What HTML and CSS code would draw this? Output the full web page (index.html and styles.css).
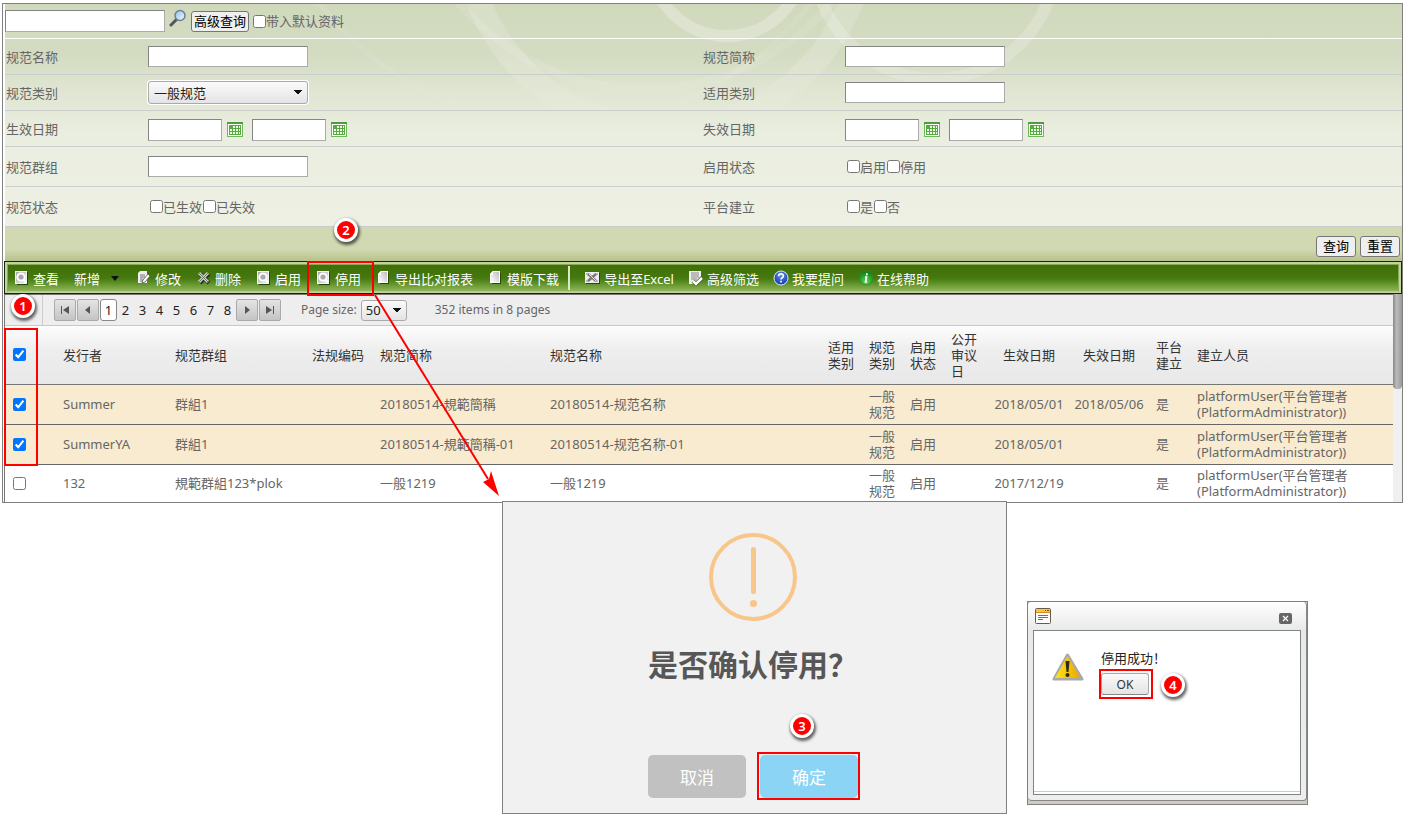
FILE: index.html
```html
<!DOCTYPE html>
<html lang="zh-CN">
<head>
<meta charset="utf-8">
<title>规范管理</title>
<link rel="stylesheet" href="styles.css">
</head>
<body>
<svg class="defs" aria-hidden="true">
  <defs>
    <linearGradient id="lens" x1="0" y1="0" x2="1" y2="1"><stop offset="0" stop-color="#8fc0e8"/><stop offset="1" stop-color="#f4faff"/></linearGradient>
    <linearGradient id="paper" x1="1" y1="0" x2="0" y2="1"><stop offset="0" stop-color="#bdbdbd"/><stop offset="1" stop-color="#fff"/></linearGradient>
    <linearGradient id="tile" x1="0" y1="0" x2="1" y2="1"><stop offset="0" stop-color="#a8a8a8"/><stop offset="1" stop-color="#efefef"/></linearGradient>
    <radialGradient id="blue" cx=".5" cy=".3" r=".7"><stop offset="0" stop-color="#5b8df0"/><stop offset="1" stop-color="#1237a8"/></radialGradient>
    <radialGradient id="green" cx=".5" cy=".75" r=".7"><stop offset="0" stop-color="#5ad84a"/><stop offset="1" stop-color="#0f7d1c"/></radialGradient>
    <linearGradient id="warn" x1="0" y1="0" x2="1" y2="0"><stop offset="0" stop-color="#ffe21a"/><stop offset="1" stop-color="#e9a800"/></linearGradient>
    <symbol id="cal" viewBox="0 0 16 15">
      <rect x=".5" y=".5" width="15" height="14" fill="#fff" stroke="#6fb95a"/>
      <path d="M0 0h16v2H0z" fill="#4e9c3a"/><path d="M2 3h12v10H2z" fill="#58a844"/>
      <path d="M6 4h2v2H6zM9 4h2v2H9zM12 4h1v2h-1zM3 7h2v2H3zM6 7h2v2H6zM9 7h2v2H9zM12 7h1v2h-1zM3 10h2v2H3zM6 10h2v2H6zM9 10h2v2H9zM12 10h1v2h-1z" fill="#eaffdf"/>
    </symbol>
    <symbol id="view" viewBox="0 0 16 16">
      <path d="M3 2h11v13H3z" fill="#234507"/><path d="M1 1h12v13H1z" fill="#f4f4f4"/><path d="M2 2h10v11H2z" fill="url(#tile)"/>
      <circle cx="7" cy="7" r="3.600" fill="#a9a9a9" stroke="#fff" stroke-width="2"/><path d="m9.500 10 2.500 2.500" stroke="#fff" stroke-width="2"/>
    </symbol>
    <symbol id="doc" viewBox="0 0 16 16">
      <path d="M6 3h7v11H4V6z" fill="#244806"/><path d="M5 1h7v12H2V4z" fill="#fff"/><path d="M5 2h6v10H3V5h2z" fill="url(#paper)"/><path d="M2 4h3V1z" fill="#fff"/>
    </symbol>
  </defs>
</svg>
<main class="page">
  <section class="app">
    <form class="search">
      <svg class="rings" viewBox="0 0 1400 222" preserveAspectRatio="xMinYMin slice" aria-hidden="true">
        <g fill="none" stroke="#fff">
          <circle cx="722" cy="-45" r="77" stroke-width="12" stroke-opacity=".25"/>
          <circle cx="930" cy="-46" r="121" stroke-width="12" stroke-opacity=".2"/>
          <circle cx="660" cy="-75" r="200" stroke-width="24" stroke-opacity=".16"/>
          <circle cx="640" cy="-160" r="245" stroke-width="8" stroke-opacity=".1"/>
          <circle cx="560" cy="-190" r="310" stroke-width="5" stroke-opacity=".08"/>
        </g>
      </svg>
      <div class="quick">
        <input class="text wide" type="text" aria-label="关键字">
        <svg class="lens" viewBox="0 0 18 18" aria-hidden="true"><path d="m2 16 6-6" stroke="#555" stroke-width="3" stroke-linecap="round"/><circle cx="11" cy="6.500" r="5" fill="url(#lens)" stroke="#6f7f93" stroke-width="1.500"/></svg>
        <button class="btn" type="button">高级查询</button>
        <label class="check"><input type="checkbox">带入默认资料</label>
      </div>
      <div class="row"><div class="field"><label for="f1">规范名称</label><input class="text wide" id="f1" type="text"></div><div class="field"><label for="f2">规范简称</label><input class="text wide" id="f2" type="text"></div></div>
      <div class="row"><div class="field"><label for="f3">规范类别</label><select class="select" id="f3"><option>一般规范</option></select></div><div class="field"><label for="f4">适用类别</label><input class="text wide" id="f4" type="text"></div></div>
      <div class="row">
        <div class="field"><label for="f5">生效日期</label><div class="dates"><input class="text date" id="f5" type="text"><svg class="cal"><use href="#cal"/></svg><input class="text date" type="text" aria-label="生效日期至"><svg class="cal"><use href="#cal"/></svg></div></div>
        <div class="field"><label for="f6">失效日期</label><div class="dates"><input class="text date" id="f6" type="text"><svg class="cal"><use href="#cal"/></svg><input class="text date" type="text" aria-label="失效日期至"><svg class="cal"><use href="#cal"/></svg></div></div>
      </div>
      <div class="row tall"><div class="field"><label for="f7">规范群组</label><input class="text wide" id="f7" type="text"></div><div class="field"><span>启用状态</span><div class="checks"><label class="check"><input type="checkbox">启用</label><label class="check"><input type="checkbox">停用</label></div></div></div>
      <div class="row tall"><div class="field"><span>规范状态</span><div class="checks"><label class="check"><input type="checkbox">已生效</label><label class="check"><input type="checkbox">已失效</label></div></div><div class="field"><span>平台建立</span><div class="checks"><label class="check"><input type="checkbox">是</label><label class="check"><input type="checkbox">否</label></div></div></div>
      <div class="actions"><button class="btn" type="button">查询</button><button class="btn" type="button">重置</button></div>
    </form>

    <nav class="toolbar"><div class="tools">
      <button class="tool" type="button"><svg><use href="#view"/></svg>查看</button>
      <button class="tool menu" type="button">新增<span class="caret"></span></button>
      <button class="tool" type="button"><svg viewBox="0 0 16 16"><path d="M4 1h7v12H2V3z" fill="#eee"/><path d="M4 5h5M4 7h5M4 9h3M4 11h3" stroke="#777"/><path d="m6 13 1-3 5-6 2 2-5 6z" fill="#fff" stroke="#555" stroke-width=".8"/></svg>修改</button>
      <button class="tool" type="button"><svg viewBox="0 0 16 16"><path d="m4 4 9 9M13 4l-9 9" stroke="#203f06" stroke-width="4"/><path d="m3 3 9 9M12 3l-9 9" stroke="#d0d0d0" stroke-width="3"/><path d="m3 3 9 9M12 3l-9 9" stroke="#555" stroke-width=".8"/></svg>删除</button>
      <button class="tool" type="button"><svg><use href="#view"/></svg>启用</button>
      <button class="tool marked" type="button"><svg><use href="#view"/></svg>停用</button>
      <button class="tool" type="button"><svg><use href="#doc"/></svg>导出比对报表</button>
      <button class="tool" type="button"><svg><use href="#doc"/></svg>模版下载</button>
      <span class="sep"></span>
      <button class="tool" type="button"><svg viewBox="0 0 16 16"><path d="M1 3h14v11H1z" fill="#244806"/><path d="M0 2h14v11H0z" fill="#eee"/><path d="M1 4h3M1 11h3M10 4h3M10 11h3" stroke="#888"/><path d="m3 4 8 7M11 4l-8 7" stroke="#777" stroke-width="2.500"/><path d="m4 4 7 7" stroke="#fff" stroke-width=".8"/></svg>导出至Excel</button>
      <button class="tool" type="button"><svg viewBox="0 0 16 16"><path d="M1 1h12v11H8l-2 2H1z" fill="#eee"/><path d="M3 3h8M3 5h8M3 7h8M3 9h6" stroke="#888"/><path d="m5 11 3 3 6-6" fill="none" stroke="#35600e" stroke-width="4"/><path d="m5 11 3 3 6-6" fill="none" stroke="#fff" stroke-width="2.500"/></svg>高级筛选</button>
      <button class="tool" type="button"><svg viewBox="0 0 16 16"><circle cx="8" cy="8" r="7" fill="url(#blue)" stroke="#dfe9ff"/><path d="M5.600 6.200c0-3 4.800-3 4.800-.2 0 1.800-2.400 1.600-2.400 3.400M8 10.800v1.700" fill="none" stroke="#fff" stroke-width="1.700"/></svg>我要提问</button>
      <button class="tool" type="button"><svg viewBox="0 0 16 16"><circle cx="8" cy="8" r="7" fill="url(#green)" stroke="#2d8a2a" stroke-width=".8"/><path d="M8.800 3.200v2M7 7h1.500l-1 5h1.600" fill="none" stroke="#fff" stroke-width="1.700"/></svg>在线帮助</button>
    </div></nav>

    <div class="grid">
      <div class="content">
        <div class="pager">
          <span class="edge"></span>
          <button class="pg" type="button" aria-label="首页"><svg viewBox="0 0 10 10"><path d="M1 1h1v8H1zM9 1v8L3 5z"/></svg></button>
          <button class="pg" type="button" aria-label="上一页"><svg viewBox="0 0 10 10"><path d="M7 1v8L2 5z"/></svg></button>
          <span class="nums"><a class="on" href="#">1</a><a href="#">2</a><a href="#">3</a><a href="#">4</a><a href="#">5</a><a href="#">6</a><a href="#">7</a><a href="#">8</a></span>
          <button class="pg" type="button" aria-label="下一页"><svg viewBox="0 0 10 10"><path d="M3 1v8l5-4z"/></svg></button>
          <button class="pg" type="button" aria-label="末页"><svg viewBox="0 0 10 10"><path d="M8 1h1v8H8zM1 1v8l6-4z"/></svg></button>
          <label class="size" for="ps">Page size:</label>
          <select class="select small" id="ps"><option>50</option></select>
          <span class="total">352 items in 8 pages</span>
        </div>
        <table>
          <colgroup><col class="c51"><col class="c112"><col class="c137"><col class="c68"><col class="c170"><col class="c278"><col class="c41"><col class="c41"><col class="c41"><col class="c45"><col class="c80"><col class="c80"><col class="c41"><col></colgroup>
          <thead><tr><th><input type="checkbox" checked aria-label="全选"></th><th>发行者</th><th>规范群组</th><th>法规编码</th><th>规范简称</th><th>规范名称</th><th>适用类别</th><th>规范类别</th><th>启用状态</th><th>公开审议日</th><th class="mid">生效日期</th><th class="mid">失效日期</th><th>平台建立</th><th>建立人员</th></tr></thead>
          <tbody>
            <tr class="sel"><td><input type="checkbox" checked aria-label="Summer"></td><td>Summer</td><td>群組1</td><td></td><td>20180514-規範簡稱</td><td>20180514-规范名称</td><td></td><td>一般规范</td><td>启用</td><td></td><td class="mid">2018/05/01</td><td class="mid">2018/05/06</td><td>是</td><td>platformUser(平台管理者<br>(PlatformAdministrator))</td></tr>
            <tr class="sel"><td><input type="checkbox" checked aria-label="SummerYA"></td><td>SummerYA</td><td>群組1</td><td></td><td>20180514-規範簡稱-01</td><td>20180514-规范名称-01</td><td></td><td>一般规范</td><td>启用</td><td></td><td class="mid">2018/05/01</td><td></td><td>是</td><td>platformUser(平台管理者<br>(PlatformAdministrator))</td></tr>
            <tr><td><input type="checkbox" aria-label="132"></td><td>132</td><td>規範群組123*plok</td><td></td><td>一般1219</td><td>一般1219</td><td></td><td>一般规范</td><td>启用</td><td></td><td class="mid">2017/12/19</td><td></td><td>是</td><td>platformUser(平台管理者<br>(PlatformAdministrator))</td></tr>
          </tbody>
        </table>
        <span class="mark column"></span>
      </div>
      <div class="scroll"><span class="thumb"></span></div>
    </div>
  </section>

  <section class="windows">
    <div class="confirm" role="dialog" aria-labelledby="ct">
      <svg class="alert" viewBox="0 0 88 88" aria-hidden="true"><circle cx="44" cy="44" r="42" fill="none" stroke="#f8c688" stroke-width="4"/><rect x="42" y="14" width="5" height="47" rx="2" fill="#f8c688"/><circle cx="44.500" cy="70.500" r="3.600" fill="#f8c688"/></svg>
      <h2 id="ct">是否确认停用？</h2>
      <div class="choices"><button class="cancel" type="button">取消</button><span class="marked"><button class="ok" type="button">确定</button></span></div>
    </div>
    <div class="done" role="dialog" aria-label="停用成功"><div class="frame">
      <div class="title">
        <svg class="wicon" viewBox="0 0 16 16" aria-hidden="true"><rect x=".5" y=".5" width="15" height="15" rx="1" fill="#fff" stroke="#6b5b45"/><path d="M1 1h14v3H1z" fill="#f5c54a"/><path d="M1 4h14v1H1z" fill="#d98b1e"/><path d="M10 2h1v1h-1zM12 2h2v1h-2z" fill="#7a4b00"/><path d="M3 7.500h10M3 9.500h10M3 11.500h5" stroke="#3f9140"/></svg>
        <button class="close" type="button" aria-label="关闭"><svg viewBox="0 0 13 11"><path d="m4 3 5 5M9 3 4 8" stroke="#fff" stroke-width="1.200"/></svg></button>
      </div>
      <div class="body">
        <svg class="warn" viewBox="0 0 32 29" aria-hidden="true"><path d="M15.500 2 30 26H2z" fill="#999" stroke="#a9a9a9" stroke-width="3" stroke-linejoin="round"/><path d="M15.500 3 28.500 25H3z" fill="url(#warn)"/><path d="M13.500 8h4l-1 11h-2z" fill="#2a2a10"/><circle cx="15.500" cy="22" r="2" fill="#2a2a10"/></svg>
        <div class="msg"><p>停用成功！</p><span class="marked"><button class="plain" type="button">OK</button></span></div>
      </div>
    </div></div>
  </section>

  <svg class="arrow" viewBox="0 0 126 204" aria-hidden="true"><path d="m1 1 113 184" stroke="#f00" stroke-width="2"/><path d="m125 202-16-14 6-3 2-8z" fill="#f00"/></svg>
  <span class="badge b1">1</span><span class="badge b2">2</span><span class="badge b3">3</span><span class="badge b4">4</span>
</main>
</body>
</html>
```

FILE: styles.css
```css
* { box-sizing: border-box; }
body, button, input, select { font-family: "Noto Sans", "Noto Sans CJK SC", sans-serif; font-size: 13px; }
body { margin: 0; background: #fff; color: #666; line-height: 16px; }
button, select, input { margin: 0; }
.defs { position: absolute; width: 0; height: 0; }
.page { position: relative; padding: 3px 1px 0 2px; }
.app { border: 1px solid #808080; padding-left: 1px; }

.search { position: relative; margin-left: 1px; background: linear-gradient(#d1d9bd 0, #d3dbc1 50px, #dfe5d1 85px, #eaeee0 130px, #edf0e2 220px); }
.rings { position: absolute; left: 0; top: 0; width: 100%; height: 222px; mask-image: linear-gradient(#000 60px, transparent 125px); }
.search > div { position: relative; }
.quick { display: flex; align-items: center; height: 35px; border-bottom: 1px solid #fff; }
.text { height: 21px; padding: 1px 3px; border: 1px solid #ababab; border-top-color: #858585; border-left-color: #858585; background: #fff; }
.wide { width: 160px; }
.date { width: 74px; height: 22px; }
.quick .text { height: 22px; }
.lens { width: 18px; height: 18px; margin: 0 4px; }
.quick .lens { align-self: flex-start; margin-top: 5px; }
.btn { height: 21px; padding: 0 2px; border: 1px solid #767676; border-radius: 3px; background: #efefef; color: #000; white-space: nowrap; line-height: 17px; }
.check { display: inline-flex; align-items: center; white-space: nowrap; }
.check input { width: 13px; height: 13px; }
.quick .check { margin-left: 4px; }
.row { display: grid; grid-template-columns: 1fr 1fr; height: 36px; padding-right: 3px; border-bottom: 1px solid #ccc; }
.row.tall { height: 40px; }
.field { display: flex; align-items: center; padding-left: 1px; }
.field > :first-child { width: 142px; flex: none; }
.dates { display: flex; align-items: center; padding-top: 2px; }
.cal { width: 16px; height: 15px; margin: 0 9px 0 5px; }
.checks { padding-left: 2px; display: flex; gap: 1px; }
.select { appearance: none; width: 160px; height: 23px; padding: 0 5px; border: 1px solid #aaa; border-radius: 3px; color: #222;
  background-image: linear-gradient(to bottom left, #111 50%, transparent 51%), linear-gradient(to bottom right, #111 50%, transparent 51%), linear-gradient(#fafafa, #e4e4e4);
  background-size: 4px 5px, 4px 5px, 100% 100%; background-position: right 9px center, right 5px center, 0 0; background-repeat: no-repeat; box-shadow: 0 0 0 1px #fff; }
.actions { display: flex; justify-content: flex-end; align-items: center; gap: 4px; height: 34px; padding: 5px 2px 0 0; background: linear-gradient(#d1d9b2 0, #d1d9b2 22px, #b9c48c 33px); }
.actions .btn { padding: 0 6px; }

.toolbar { border: 1px solid #14260c; background: #c3d39c; padding: 2px 2px 1px; }
.tools { display: flex; align-items: center; gap: 15px; height: 28px; padding-left: 6px; border: 1px solid #8aa85a; border-bottom-color: #b7cb85; background: linear-gradient(#3f7008, #45780e 50%, #5e9128 70%, #92b55c); }
.tool { position: relative; display: flex; align-items: center; gap: 3px; height: 26px; padding: 0; border: 0; background: none; color: #fff; white-space: nowrap; }
.tool svg { width: 16px; height: 16px; }
.caret { margin: 0 2px 0 8px; border: 4px solid transparent; border-top: 5px solid #111; border-bottom: 0; }
.sep { width: 2px; height: 24px; margin: 0 0 0 -6px; background: #dce8c4; }
.sep ~ .tool { margin-right: -1px; }
.tool.marked::after { content: ""; position: absolute; inset: -4px -13px -5px -9px; border: 2px solid #f00; z-index: 2; }

.grid { display: flex; border-left: 1px solid #777; }
.content { position: relative; flex: 1; min-width: 0; border-top: 1px solid #777; }
.pager { display: flex; align-items: center; height: 31px; background: #eee; border-bottom: 1px solid #c8c8c8; }
.edge { width: 38px; height: 31px; border-right: 1px solid #ccc; margin-right: 11px; }
.pg { width: 22px; height: 22px; margin-right: 1px; padding: 0; border: 1px solid #aaa; border-radius: 2px; background: linear-gradient(#e4e4e4, #c4c4c4); display: grid; place-items: center; }
.pg svg { width: 12px; height: 10px; fill: #555; }
.nums { display: flex; }
.nums a { width: 17px; height: 22px; line-height: 20px; border: 1px solid transparent; text-align: center; color: #222; text-decoration: none; }
.nums .on { background: #fff; border-color: #888; border-radius: 3px; }
.size { margin: 0 4px 0 19px; font-size: 12px; }
.small { width: 46px; height: 21px; padding: 0 4px; box-shadow: none; }
.total { margin-left: 28px; font-size: 12px; }
table { width: 100%; border-collapse: collapse; table-layout: fixed; }
th, td { padding: 0 5px 0 7px; text-align: left; font-weight: 400; overflow-wrap: break-word; }
th:first-child, td:first-child { padding-left: 8px; }
td:last-child, th:last-child, .mid { white-space: nowrap; }
th.mid, td.mid { padding: 0; text-align: center; }
th { height: 58px; color: #333; background: linear-gradient(#fdfdfd, #eee 40%, #e8e8e8); border-bottom: 1px solid #777; }
td { height: 40px; border-bottom: 1px solid #666; }
tbody tr:last-child td { height: 38px; border-bottom: 0; }
.sel { background: #f9ebcf; }
th input, td input { display: block; width: 13px; height: 13px; }
.c51 { width: 51px; } .c112 { width: 112px; } .c137 { width: 137px; } .c68 { width: 68px; } .c170 { width: 170px; } .c278 { width: 278px; } .c41 { width: 41px; } .c45 { width: 45px; } .c80 { width: 80px; }
.mark.column { position: absolute; left: -1px; top: 33px; width: 34px; height: 138px; border: 2px solid #f00; }
.scroll { width: 9px; background: #f0f0f0; }
.thumb { display: block; height: 95px; border-radius: 0 0 4px 4px; background: linear-gradient(to right, #888, #bbb 40%, #999); }

.windows { display: flex; align-items: flex-start; gap: 20px; margin: -2px 0 0 500px; position: relative; }
.confirm { width: 505px; border: 1px solid #808080; background: #f1f1f1; padding: 31px 3px 15px 0; display: flex; flex-direction: column; align-items: center; }
.alert { width: 88px; height: 88px; }
.confirm h2 { margin: 24px 0 70px; font-size: 30px; line-height: 40px; font-weight: 700; color: #575757; white-space: nowrap; }
.choices { display: flex; gap: 14px; }
.choices button { width: 98px; height: 43px; border: 0; border-radius: 5px; color: #fff; font-size: 17px; }
.cancel { background: #c1c1c1; }
.ok { background: #8cd4f5; }
span.marked { position: relative; display: inline-flex; }
span.marked::after { content: ""; position: absolute; inset: -3px -2px -2px -3px; border: 2px solid #f00; pointer-events: none; }
.done { width: 281px; margin-top: 100px; border: 1px solid #808080; background: #d0cabf; padding-bottom: 3px; }
.frame { border-radius: 4px; border-right: 1px solid #888; border-bottom: 1px solid #888; background: linear-gradient(#fff, #e9e9e9 28px, #eee); padding: 0 5px 5px; }
.title { display: flex; align-items: center; justify-content: space-between; height: 28px; padding: 0 9px 0 2px; }
.wicon { width: 16px; height: 16px; }
.close { width: 13px; height: 11px; margin-top: 5px; padding: 0; border: 0; border-radius: 2px; background: #666; display: grid; }
.close svg { width: 13px; height: 11px; }
.body { display: flex; gap: 17px; height: 165px; padding: 19px 18px; border: 1px solid #7d8488; background: #fff; box-shadow: inset 0 -2px #fff, inset 0 -3px #c5cdd2; }
.warn { width: 32px; height: 29px; margin-top: 3px; }
.msg p { margin: 0 0 7px; color: #222; }
.plain { width: 48px; height: 22px; padding: 0; border: 1px solid #aaa; border-bottom-color: #888; border-radius: 3px; background: linear-gradient(#fafafa, #e4e4e4); color: #333; font-size: 12px; }
.msg .marked::after { inset: -4px -4px -4px -2px; }

.arrow { position: absolute; left: 374px; top: 294px; width: 126px; height: 204px; }
.badge { position: absolute; width: 24px; height: 24px; border: 3px solid #fff; border-radius: 50%; background: #f00; box-shadow: 1px 2px 3px 1px rgba(0, 0, 0, .6); color: #fff; font-size: 13px; line-height: 18px; text-align: center; font-weight: 600; }
.b1 { left: 11px; top: 294px; }
.b2 { left: 334px; top: 218px; }
.b3 { left: 790px; top: 714px; }
.b4 { left: 1161px; top: 673px; }
```
